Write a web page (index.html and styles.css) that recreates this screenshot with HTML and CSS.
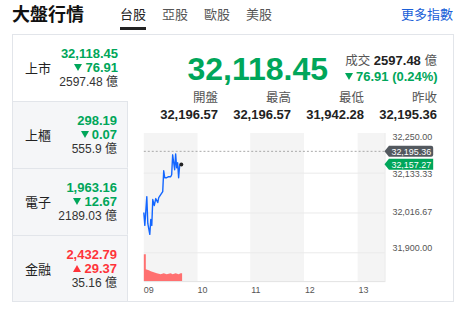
FILE: index.html
```html
<!DOCTYPE html>
<html lang="zh-Hant">
<head>
<meta charset="utf-8">
<link rel="stylesheet" href="styles.css">
</head>
<body>
<div class="header">
  <div class="title">大盤行情</div>
  <div class="tabs">
    <div class="tab active">台股</div>
    <div class="tab">亞股</div>
    <div class="tab">歐股</div>
    <div class="tab">美股</div>
  </div>
  <a class="more">更多指數</a>
</div>
<div class="card">
  <div class="side">
    <div class="row active">
      <div class="label">上市</div>
      <div class="vals">
        <div class="v1 up-g">32,118.45</div>
        <div class="v2 up-g"><span class="tri-down"></span>76.91</div>
        <div class="v3">2597.48 億</div>
      </div>
    </div>
    <div class="row">
      <div class="label">上櫃</div>
      <div class="vals">
        <div class="v1 up-g">298.19</div>
        <div class="v2 up-g"><span class="tri-down"></span>0.07</div>
        <div class="v3">555.9 億</div>
      </div>
    </div>
    <div class="row">
      <div class="label">電子</div>
      <div class="vals">
        <div class="v1 up-g">1,963.16</div>
        <div class="v2 up-g"><span class="tri-down"></span>12.67</div>
        <div class="v3">2189.03 億</div>
      </div>
    </div>
    <div class="row">
      <div class="label">金融</div>
      <div class="vals">
        <div class="v1 red">2,432.79</div>
        <div class="v2 red"><span class="tri-up"></span>29.37</div>
        <div class="v3">35.16 億</div>
      </div>
    </div>
  </div>
  <div class="main">
    <div class="top">
      <div class="big">32,118.45</div>
      <div class="info">
        <div class="vol"><span class="muted">成交</span> <b>2597.48</b> <span class="muted">億</span></div>
        <div class="chg up-g"><span class="tri-down"></span>76.91 (0.24%)</div>
      </div>
    </div>
    <div class="stats">
      <div class="stat"><div class="slabel">開盤</div><div class="sval">32,196.57</div></div>
      <div class="stat"><div class="slabel">最高</div><div class="sval">32,196.57</div></div>
      <div class="stat"><div class="slabel">最低</div><div class="sval">31,942.28</div></div>
      <div class="stat"><div class="slabel">昨收</div><div class="sval">32,195.36</div></div>
    </div>
    <svg class="chart" width="325" height="179" viewBox="128 123 325 179" xmlns="http://www.w3.org/2000/svg">
      <rect x="143" y="133" width="54" height="149" fill="#f4f4f4"/>
      <rect x="250" y="133" width="54" height="149" fill="#f4f4f4"/>
      <rect x="358" y="133" width="27" height="149" fill="#f4f4f4"/>
      <line x1="143" y1="173.5" x2="385" y2="173.5" stroke="#eaeaea"/>
      <line x1="143" y1="213.5" x2="385" y2="213.5" stroke="#eaeaea"/>
      <line x1="143" y1="253.5" x2="385" y2="253.5" stroke="#eaeaea"/>
      <line x1="143" y1="282.5" x2="385.5" y2="282.5" stroke="#e2e2e2"/>
      <line x1="385.5" y1="133" x2="385.5" y2="283" stroke="#e6e6e6"/>
      <line x1="143" y1="151.5" x2="385" y2="151.5" stroke="#a8a8a8" stroke-dasharray="2 2"/>
      <polygon fill="#ff7070" points="143,282 143,255 145,255 145,270 148,271 150,272 153,273 156,274 160,275 163,274 166,275 170,274 172,275 175,274 178,275 180,274 181.5,274 181.5,282"/>
      <polyline fill="none" stroke="#1366ff" stroke-width="1.4" stroke-linejoin="round" points="143,213 144,226 146,197 147,224 149,235 150,220 151,226 152,200 153.5,206 155,199 157,203 158,198 160,195 162,192 163,171 164,178 166,178 168,177 170,177 171,175 172,155 174,170 175,154 176,168 177,163 178,178 179,166 180.7,165"/>
      <circle cx="180.7" cy="164.7" r="2" fill="#222"/>
      <g class="ylab">
        <text x="393" y="140">32,250.00</text>
        <text x="393" y="177">32,133.33</text>
        <text x="393" y="216">32,016.67</text>
        <text x="393" y="252">31,900.00</text>
      </g>
      <path d="M385 151.5 L389.5 146 H432 Q434 146 434 148 V155 Q434 157 432 157 H389.5 Z" fill="#53595f"/>
      <text class="tagt" x="392" y="155">32,195.36</text>
      <path d="M385 164.5 L389.5 159 H434 V170 H389.5 Z" fill="#00a65a"/>
      <text class="tagt" x="392" y="168">32,157.27</text>
      <g class="xlab">
        <text x="143" y="294">09</text>
        <text x="197" y="294">10</text>
        <text x="251" y="294">11</text>
        <text x="305" y="294">12</text>
        <text x="359" y="294">13</text>
      </g>
    </svg>
  </div>
</div>
</body>
</html>
```
FILE: styles.css
```css
* { box-sizing: border-box; }
body {
  margin: 0;
  background: #fff;
  font-family: "Liberation Sans", "Noto Sans CJK TC", sans-serif;
  color: #222;
  width: 466px;
  height: 312px;
  overflow: hidden;
}
.header {
  display: flex;
  align-items: center;
  height: 30px;
  margin-bottom: 4px;
  padding: 0 13px 0 12px;
}
.title {
  font-size: 18px;
  font-weight: bold;
  color: #111;
  line-height: 30px;
  width: 108px;
}
.tabs {
  display: flex;
  gap: 16px;
  flex: 1;
}
.tab {
  font-size: 13px;
  line-height: 30px;
  height: 30px;
  color: #555;
  width: 26px;
}
.tab.active {
  color: #222;
  box-shadow: inset 0 -3px 0 #222;
}
.more {
  font-size: 13px;
  color: #1a5fd8;
  line-height: 30px;
}
.card {
  margin: 0 12px;
  height: 268px;
  border: 1px solid #e2e5ea;
  border-bottom: 0;
  display: flex;
}
.side {
  width: 115px;
  display: flex;
  flex-direction: column;
}
.row {
  flex: 1;
  display: flex;
  align-items: center;
  justify-content: space-between;
  padding: 0 10px 0 12px;
  background: #f5f6f8;
  border-top: 1px solid #e2e5ea;
  border-right: 1px solid #e2e5ea;
  border-bottom: 1px solid transparent;
}
.row:last-child { border-bottom: 1px solid #e2e5ea; }
.row.active {
  background: #fff;
  border-top: 0;
  border-right: 0;
}
.label {
  font-size: 13px;
  color: #222;
}
.vals {
  text-align: right;
  line-height: 14px;
}
.v1, .v2 {
  font-size: 13px;
  font-weight: bold;
}
.v3 {
  font-size: 12px;
  color: #333;
}
.up-g { color: #00a65a; }
.red { color: #ff333a; }
.tri-down, .tri-up {
  display: inline-block;
  width: 0;
  height: 0;
  border-left: 4px solid transparent;
  border-right: 4px solid transparent;
  margin-right: 3px;
  vertical-align: 1px;
}
.tri-down { border-top: 7px solid currentColor; }
.tri-up { border-bottom: 7px solid currentColor; }
.main {
  flex: 1;
  padding-top: 16px;
  display: flex;
  flex-direction: column;
  border-bottom: 1px solid #e2e5ea;
}
.top {
  display: flex;
  justify-content: flex-end;
  align-items: center;
  height: 36px;
  padding-right: 16px;
  gap: 17px;
}
.big {
  font-size: 32px;
  font-weight: bold;
  color: #00a65a;
  line-height: 36px;
}
.info {
  width: 92px;
  text-align: right;
  line-height: 16px;
  font-size: 13px;
  white-space: nowrap;
}
.muted { color: #555; font-size: 12.5px; }
.vol b { color: #222; }
.chg { font-weight: bold; }
.stats {
  display: grid;
  grid-template-columns: repeat(4, 73px);
  justify-content: end;
  padding-right: 16px;
  margin-top: 3px;
}
.stat { text-align: right; }
.slabel {
  font-size: 12.5px;
  color: #555;
  line-height: 16px;
}
.sval {
  font-size: 13px;
  font-weight: bold;
  color: #222;
  line-height: 16px;
  margin-top: 1px;
}
.chart {
  display: block;
  font-family: "Liberation Sans", sans-serif;
}
.ylab text, .xlab text {
  font-size: 9px;
  fill: #555;
}
.tagt {
  font-size: 9px;
  fill: #fff;
}
```
